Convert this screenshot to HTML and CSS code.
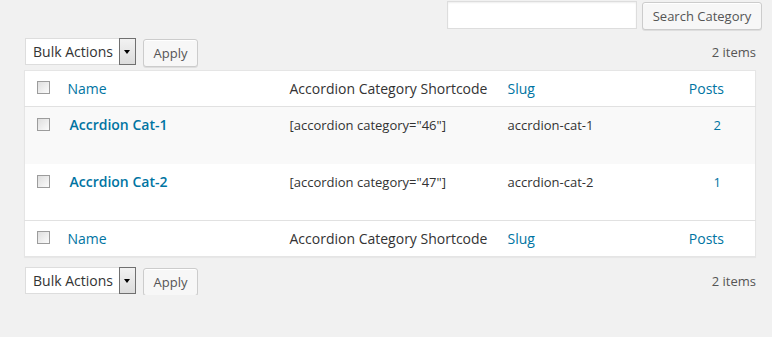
FILE: index.html
```html
<!DOCTYPE html>
<html>
<head>
<meta charset="utf-8">
<link rel="stylesheet" href="styles.css">
</head>
<body>
<div class="page">
  <div class="search-row">
    <input class="search-input" type="text">
    <button class="btn search-btn">Search Category</button>
  </div>
  <div class="tablenav top">
    <div class="select"><span class="select-text">Bulk Actions</span><span class="select-arrow"></span></div>
    <button class="btn apply">Apply</button>
    <span class="count">2 items</span>
  </div>
  <table class="list">
    <thead>
      <tr>
        <th class="col-cb"><span class="cb"></span></th>
        <th class="col-name"><a>Name</a></th>
        <th class="col-code">Accordion Category Shortcode</th>
        <th class="col-slug"><a>Slug</a></th>
        <th class="col-posts"><a>Posts</a></th>
      </tr>
    </thead>
    <tbody>
      <tr class="alt">
        <td class="col-cb"><span class="cb"></span></td>
        <td class="col-name"><a class="row-title">Accrdion Cat-1</a></td>
        <td class="col-code">[accordion category="46"]</td>
        <td class="col-slug">accrdion-cat-1</td>
        <td class="col-posts"><a>2</a></td>
      </tr>
      <tr>
        <td class="col-cb"><span class="cb"></span></td>
        <td class="col-name"><a class="row-title">Accrdion Cat-2</a></td>
        <td class="col-code">[accordion category="47"]</td>
        <td class="col-slug">accrdion-cat-2</td>
        <td class="col-posts"><a>1</a></td>
      </tr>
    </tbody>
    <tfoot>
      <tr>
        <th class="col-cb"><span class="cb"></span></th>
        <th class="col-name"><a>Name</a></th>
        <th class="col-code">Accordion Category Shortcode</th>
        <th class="col-slug"><a>Slug</a></th>
        <th class="col-posts"><a>Posts</a></th>
      </tr>
    </tfoot>
  </table>
  <div class="tablenav bottom">
    <div class="select"><span class="select-text">Bulk Actions</span><span class="select-arrow"></span></div>
    <button class="btn apply">Apply</button>
    <span class="count">2 items</span>
  </div>
</div>
</body>
</html>
```
FILE: styles.css
```css
html, body {
  margin: 0;
  padding: 0;
  background: #f1f1f1;
  font-family: "Open Sans", "Liberation Sans", sans-serif;
  color: #333;
  font-size: 13px;
}
.page {
  padding: 0 17px 0 24px;
}
.search-row {
  display: flex;
  justify-content: flex-end;
  align-items: flex-start;
  gap: 5px;
  margin-right: -7px;
  padding-top: 1px;
}
.search-input {
  box-sizing: border-box;
  width: 190px;
  height: 28px;
  margin: 0;
  border: 1px solid #ddd;
  background: #fff;
  box-shadow: inset 0 1px 2px rgba(0,0,0,.07);
  outline: none;
}
.btn {
  box-sizing: border-box;
  height: 28px;
  margin: 0;
  padding: 0 10px;
  border: 1px solid #ccc;
  border-radius: 3px;
  background: #f7f7f7;
  box-shadow: inset 0 1px 0 #fff, 0 1px 0 rgba(0,0,0,.08);
  font-family: "Open Sans", "Liberation Sans", sans-serif;
  font-size: 13px;
  color: #555;
  line-height: 26px;
  white-space: nowrap;
}
.search-btn {
  width: 120px;
  padding: 0;
  margin-top: 1px;
}
.tablenav {
  display: flex;
  align-items: flex-start;
  height: 28px;
}
.tablenav.top {
  margin-top: 8px;
}
.tablenav.bottom {
  margin-top: 10px;
}
.select {
  box-sizing: border-box;
  display: flex;
  width: 111px;
  height: 27px;
  margin-left: 1px;
  border: 1px solid #ddd;
  background: #fff;
}
.select-text {
  flex: 1;
  padding-left: 7px;
  font-size: 14px;
  line-height: 25px;
  color: #333;
  white-space: nowrap;
}
.select-arrow {
  position: relative;
  box-sizing: border-box;
  width: 17px;
  height: 27px;
  margin: -1px -1px -1px 0;
  border: 1px solid #707070;
  background: linear-gradient(#f2f2f2, #dcdcdc);
}
.select-arrow::after {
  content: "";
  position: absolute;
  left: 4px;
  top: 11px;
  border-left: 3px solid transparent;
  border-right: 3px solid transparent;
  border-top: 4px solid #000;
}
.apply {
  width: 55px;
  margin-left: 7px;
  margin-top: 1px;
  padding: 0;
}
.count {
  margin-left: auto;
  margin-right: -1px;
  font-size: 13px;
  color: #555;
  line-height: 28px;
}
.list {
  width: 732px;
  margin-top: 4px;
  border-collapse: collapse;
  background: #fff;
  border: 1px solid #e5e5e5;
  box-shadow: 0 1px 1px rgba(0,0,0,.04);
  table-layout: fixed;
}
.list th, .list td {
  padding: 0 0 0 8px;
  text-align: left;
  vertical-align: top;
}
.list thead th, .list tfoot th {
  height: 36px;
  box-sizing: border-box;
  vertical-align: middle;
  font-weight: 400;
  font-size: 14px;
  color: #333;
  white-space: nowrap;
}
.list thead tr {
  border-bottom: 1px solid #e1e1e1;
}
.list tfoot tr {
  border-top: 1px solid #e1e1e1;
}
.list tbody td {
  height: 57px;
  padding-top: 8px;
  box-sizing: border-box;
  font-size: 13px;
  color: #333;
  line-height: 20px;
}
.list tbody tr.alt {
  background: #f9f9f9;
}
.list a {
  color: #0074a2;
  text-decoration: none;
}
.list .row-title {
  font-size: 14px;
  font-weight: 600;
  margin-left: 2px;
}
.list .col-cb {
  width: 35px;
  padding: 0 0 0 12px;
  box-sizing: border-box;
}
.list tbody .col-cb {
  padding-top: 11px;
}
.list .col-name { width: 222px; box-sizing: border-box; }
.list .col-code { width: 218px; box-sizing: border-box; }
.list .col-slug { width: 150px; box-sizing: border-box; padding-left: 8px; }
.list .col-posts {
  text-align: right;
  padding-right: 31px;
  box-sizing: border-box;
}
.list tbody .col-posts {
  padding-right: 34px;
}
.cb {
  display: block;
  box-sizing: border-box;
  width: 13px;
  height: 13px;
  margin-top: -2px;
  border: 1px solid #9c9c9c;
  background: linear-gradient(135deg, #dedede, #fbfbfb);
}
.list tbody .cb {
  margin-top: 0;
}
```
